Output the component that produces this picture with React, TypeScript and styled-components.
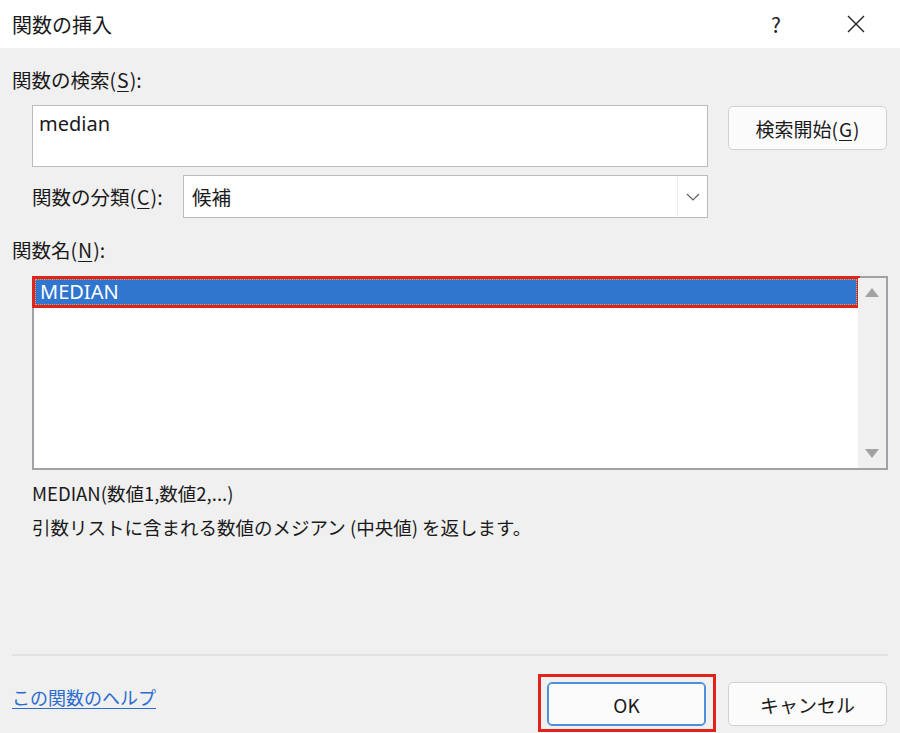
import React from 'react';
import styled, { createGlobalStyle } from 'styled-components';

const GlobalStyle = createGlobalStyle`
  html, body {
    margin: 0;
    padding: 0;
    background: #f0f0f0;
  }
  body {
    font-family: 'Noto Sans CJK JP', 'Noto Sans', sans-serif;
    color: #1a1a1a;
  }
`;

const Dialog = styled.div`
  width: 900px;
  height: 733px;
  display: flex;
  flex-direction: column;
  background: #f0f0f0;
  overflow: hidden;
`;

const TitleBar = styled.div`
  height: 48px;
  background: #ffffff;
  display: flex;
  align-items: center;
  padding-left: 12px;
  font-size: 20px;
`;

const TitleText = styled.div`
  flex: 1;
`;

const TitleButton = styled.div<{ w: number }>`
  width: ${({ w }) => w}px;
  height: 48px;
  display: flex;
  align-items: center;
  justify-content: center;
  font-size: 21px;
  color: #222;
`;

const Body = styled.div`
  flex: 1;
  display: flex;
  flex-direction: column;
  padding: 0 12px;
`;

const Label = styled.div<{ top: number; indent?: number }>`
  margin-top: ${({ top }) => top}px;
  margin-left: ${({ indent }) => indent || 0}px;
  font-size: 19.5px;
  line-height: 24px;
  height: 24px;
  white-space: nowrap;
`;

const Key = styled.span`
  text-decoration: underline;
  text-underline-offset: 3px;
  margin: 0 1px;
`;

const SearchRow = styled.div`
  display: flex;
  align-items: flex-start;
  gap: 20px;
  margin-top: 13px;
  margin-left: 20px;
`;

const SearchBox = styled.div`
  width: 676px;
  height: 62px;
  box-sizing: border-box;
  background: #fff;
  border: 1px solid #bcbcbc;
  padding: 6px 6px;
  font-family: 'Noto Sans', 'Noto Sans CJK JP', sans-serif;
  font-size: 20px;
  line-height: 24px;
`;

const Button = styled.button<{ primary?: boolean }>`
  box-sizing: border-box;
  width: 159px;
  height: 44px;
  background: #fbfbfb;
  border: 1px solid ${({ primary }) => (primary ? '#4d8fdb' : '#d0d0d0')};
  box-shadow: ${({ primary }) => (primary ? 'inset 0 0 0 1px #4d8fdb' : 'none')};
  border-radius: 5px;
  font-family: 'Noto Sans CJK JP', 'Noto Sans', sans-serif;
  font-size: 19px;
  color: #1a1a1a;
  padding: 0;
`;

const SearchButton = styled(Button)`
  margin-top: 1px;
`;

// red annotation frame drawn over the OK button
const Highlight = styled.div`
  position: relative;
  display: flex;

  &::after {
    content: '';
    position: absolute;
    top: -8px;
    bottom: -6px;
    left: -9px;
    right: -10px;
    border: 3px solid #e0231c;
    pointer-events: none;
  }
`;

const CategoryRow = styled.div`
  display: flex;
  align-items: center;
  margin-top: 8px;
  margin-left: 20px;
  height: 43px;
`;

const CategoryLabel = styled.div`
  width: 151px;
  font-size: 19.5px;
  white-space: nowrap;
`;

const Select = styled.div`
  box-sizing: border-box;
  width: 525px;
  height: 43px;
  background: #fff;
  border: 1px solid #bcbcbc;
  display: flex;
  align-items: stretch;
`;

const SelectValue = styled.div`
  flex: 1;
  padding-left: 8px;
  display: flex;
  align-items: center;
  font-size: 19.5px;
`;

const SelectArrow = styled.div`
  width: 29px;
  border-left: 1px solid #ececec;
  display: flex;
  align-items: center;
  justify-content: center;
`;

const ListBox = styled.div`
  box-sizing: border-box;
  margin-top: 14px;
  margin-left: 20px;
  width: 856px;
  height: 194px;
  background: #fff;
  border: 2px solid #a2a2a6;
  display: flex;
`;

const ListItems = styled.div`
  flex: 1;
  padding: 1px 1px 0 1px;
`;

const ListItem = styled.div<{ selected?: boolean }>`
  height: 26px;
  box-sizing: border-box;
  background: ${({ selected }) => (selected ? '#3076cf' : 'transparent')};
  color: ${({ selected }) => (selected ? '#fff' : '#1a1a1a')};
  border: 1px dotted ${({ selected }) => (selected ? '#e9a040' : 'transparent')};
  outline: ${({ selected }) => (selected ? '3px solid #e0231c' : 'none')};
  padding-left: 4px;
  font-size: 20px;
  line-height: 24px;
  font-family: 'Noto Sans', 'Noto Sans CJK JP', sans-serif;
`;

const ScrollBar = styled.div`
  width: 28px;
  background: #f0f0f0;
  display: flex;
  flex-direction: column;
  justify-content: space-between;
  align-items: center;
  padding: 10px 0;
`;

const Description = styled.div`
  margin-top: 6px;
  margin-left: 20px;
  font-size: 18.5px;
  line-height: 34px;
  white-space: nowrap;
`;

const Spacer = styled.div`
  flex: 1;
`;

const Separator = styled.div`
  height: 2px;
  background: #e2e2e2;
  margin-bottom: 1px;
`;

const Footer = styled.div`
  display: flex;
  align-items: center;
  height: 44px;
  margin-top: 25px;
  margin-bottom: 7px;
`;

const HelpLink = styled.a`
  flex: 1;
  color: #2a6ccf;
  font-size: 18px;
  text-decoration: underline;
  text-underline-offset: 3px;
  margin-top: -14px;
`;

const FooterButtons = styled.div`
  display: flex;
  gap: 22px;
  margin-right: 1px;
`;

const Triangle = ({ up }: { up?: boolean }) => (
  <svg width="14" height="9" viewBox="0 0 14 9">
    <path d={up ? 'M0 9 L7 0 L14 9 Z' : 'M0 0 L7 9 L14 0 Z'} fill="#a3a3a3" />
  </svg>
);

const App: React.FC = () => {
  return (
    <Dialog>
      <GlobalStyle />
      <TitleBar>
        <TitleText>関数の挿入</TitleText>
        <TitleButton w={72}>?</TitleButton>
        <TitleButton w={88}>
          <svg width="18" height="18" viewBox="0 0 18 18">
            <path d="M1 1 L17 17 M17 1 L1 17" stroke="#222" strokeWidth="1.4" />
          </svg>
        </TitleButton>
      </TitleBar>
      <Body>
        <Label top={20}>
          関数の検索(<Key>S</Key>):
        </Label>
        <SearchRow>
          <SearchBox>median</SearchBox>
          <SearchButton>
            検索開始(<Key>G</Key>)
          </SearchButton>
        </SearchRow>
        <CategoryRow>
          <CategoryLabel>
            関数の分類(<Key>C</Key>):
          </CategoryLabel>
          <Select>
            <SelectValue>候補</SelectValue>
            <SelectArrow>
              <svg width="14" height="8" viewBox="0 0 14 8">
                <path d="M1 1 L7 7 L13 1" stroke="#606060" strokeWidth="1.2" fill="none" />
              </svg>
            </SelectArrow>
          </Select>
        </CategoryRow>
        <Label top={20}>
          関数名(<Key>N</Key>):
        </Label>
        <ListBox>
          <ListItems>
            <ListItem selected>MEDIAN</ListItem>
          </ListItems>
          <ScrollBar>
            <Triangle up />
            <Triangle />
          </ScrollBar>
        </ListBox>
        <Description>
          MEDIAN(数値1,数値2,...)
          <br />
          引数リストに含まれる数値のメジアン (中央値) を返します。
        </Description>
        <Spacer />
        <Separator />
        <Footer>
          <HelpLink>この関数のヘルプ</HelpLink>
          <FooterButtons>
            <Highlight>
              <Button primary>OK</Button>
            </Highlight>
            <Button>キャンセル</Button>
          </FooterButtons>
        </Footer>
      </Body>
    </Dialog>
  );
};

export default App;
